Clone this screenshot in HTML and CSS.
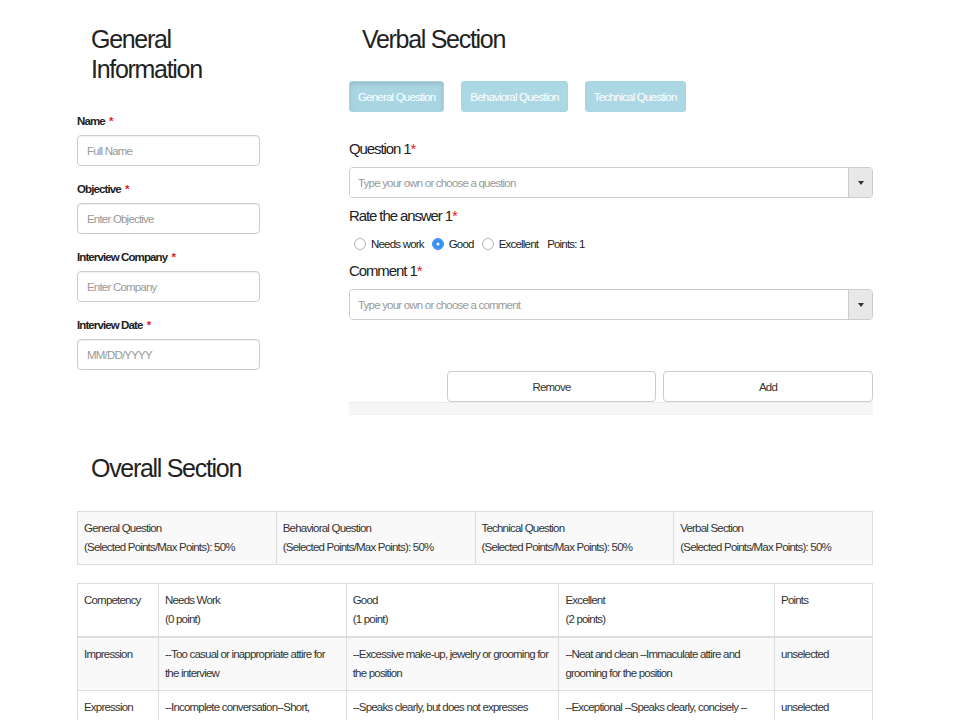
FILE: index.html
```html
<!DOCTYPE html>
<html lang="en">
<head>
<meta charset="utf-8">
<title>Interview Evaluation</title>
<link rel="stylesheet" href="styles.css">
</head>
<body>
<div class="page">
  <div class="top">
    <section class="general">
      <h2 class="heading">General Information</h2>
      <div class="field">
        <label class="label">Name <span class="req">*</span></label>
        <input class="input" type="text" placeholder="Full Name">
      </div>
      <div class="field">
        <label class="label">Objective <span class="req">*</span></label>
        <input class="input" type="text" placeholder="Enter Objective">
      </div>
      <div class="field">
        <label class="label">Interview Company <span class="req">*</span></label>
        <input class="input" type="text" placeholder="Enter Company">
      </div>
      <div class="field">
        <label class="label">Interview Date <span class="req">*</span></label>
        <input class="input" type="text" placeholder="MM/DD/YYYY">
      </div>
    </section>

    <section class="verbal">
      <h2 class="heading">Verbal Section</h2>
      <div class="tabs">
        <button class="tab tab-active">General Question</button>
        <button class="tab">Behavioral Question</button>
        <button class="tab">Technical Question</button>
      </div>
      <div class="panel">
        <div class="qlabel">Question 1<span class="req">*</span></div>
        <div class="combo">
          <input class="combo-input" type="text" placeholder="Type your own or choose a question">
          <span class="combo-btn"><span class="caret"></span></span>
        </div>
        <div class="qlabel">Rate the answer 1<span class="req">*</span></div>
        <div class="rating">
          <label class="radio"><input type="radio" name="r1"> Needs work</label>
          <label class="radio"><input type="radio" name="r1" checked> Good</label>
          <label class="radio"><input type="radio" name="r1"> Excellent</label>
          <span class="points">Points: 1</span>
        </div>
        <div class="qlabel">Comment 1<span class="req">*</span></div>
        <div class="combo">
          <input class="combo-input" type="text" placeholder="Type your own or choose a comment">
          <span class="combo-btn"><span class="caret"></span></span>
        </div>
        <div class="actions">
          <button class="btn">Remove</button>
          <button class="btn">Add</button>
        </div>
        <div class="panel-footer"></div>
      </div>
    </section>
  </div>

  <section class="overall">
    <h2 class="heading">Overall Section</h2>
    <table class="summary">
      <tr>
        <td>General Question<br>(Selected Points/Max Points): 50%</td>
        <td>Behavioral Question<br>(Selected Points/Max Points): 50%</td>
        <td>Technical Question<br>(Selected Points/Max Points): 50%</td>
        <td>Verbal Section<br>(Selected Points/Max Points): 50%</td>
      </tr>
    </table>
    <table class="rubric">
      <thead>
        <tr>
          <th class="c1">Competency</th>
          <th class="c2">Needs Work<br>(0 point)</th>
          <th class="c3">Good<br>(1 point)</th>
          <th class="c4">Excellent<br>(2 points)</th>
          <th class="c5">Points</th>
        </tr>
      </thead>
      <tbody>
        <tr>
          <td>Impression</td>
          <td>--Too casual or inappropriate attire for the interview</td>
          <td>--Excessive make-up, jewelry or grooming for the position</td>
          <td>--Neat and clean --Immaculate attire and grooming for the position</td>
          <td>unselected</td>
        </tr>
        <tr>
          <td>Expression</td>
          <td>--Incomplete conversation--Short, fragmented answers</td>
          <td>--Speaks clearly, but does not expresses his/her ideas well</td>
          <td>--Exceptional --Speaks clearly, concisely --Expresses ideas well</td>
          <td>unselected</td>
        </tr>
      </tbody>
    </table>
  </section>
</div>
</body>
</html>
```

FILE: styles.css
```css
* { box-sizing: border-box; }

html, body {
  margin: 0;
  padding: 0;
  background: #fff;
}

body {
  font-family: "Liberation Sans", Arial, sans-serif;
  color: #333;
  font-size: 11.5px;
  letter-spacing: -0.8px;
}

.page {
  width: 873px;
  padding-left: 77px;
}

.top {
  display: grid;
  grid-template-columns: 183px 1fr;
  column-gap: 89px;
}

.heading {
  margin: 24px 0 0;
  padding-left: 14px;
  font-size: 25px;
  letter-spacing: -1.3px;
  line-height: 30px;
  font-weight: normal;
  color: #222;
}

.general .heading { margin-bottom: 29px; }

.field { margin-bottom: 15px; }

.label {
  display: block;
  font-weight: bold;
  font-size: 11.5px;
  letter-spacing: -0.9px;
  line-height: 16px;
  color: #222;
  margin-bottom: 6px;
}

.label .req { margin-left: 2px; }

.req { color: #e8161b; }

.input {
  display: block;
  width: 183px;
  height: 31px;
  padding: 0 9px;
  border: 1px solid #ccc;
  border-radius: 4px;
  box-shadow: inset 0 1px 1px rgba(0,0,0,.06);
  font-family: inherit;
  font-size: 11.5px;
  letter-spacing: -0.8px;
  color: #555;
  background: #fff;
}

.input::placeholder, .combo-input::placeholder { color: #999; }

.verbal .heading { margin-bottom: 27px; padding-left: 13px; }

.tabs {
  display: flex;
  gap: 17px;
  margin-bottom: 27px;
}

.tab {
  height: 31px;
  padding: 0 8px;
  border: 1px solid #a8d5e3;
  border-radius: 3px;
  background: #acd8e6;
  color: #fff;
  font-family: inherit;
  font-size: 11.5px;
  letter-spacing: -0.8px;
}

.tab-active {
  box-shadow: inset 0 2px 4px rgba(0,0,0,.12);
  background: #a9d5e3;
}

.qlabel {
  font-size: 15px;
  letter-spacing: -1.1px;
  line-height: 20px;
  color: #222;
  margin-bottom: 8px;
}

.combo {
  display: flex;
  height: 31px;
  border: 1px solid #ccc;
  border-radius: 4px;
  margin-bottom: 8px;
  overflow: hidden;
}

.combo-input {
  flex: 1;
  border: 0;
  padding: 0 8px;
  font-family: inherit;
  font-size: 11.5px;
  letter-spacing: -0.8px;
  color: #555;
  background: #fff;
  outline: none;
}

.combo-btn {
  width: 24px;
  background: #e8e8e8;
  border-left: 1px solid #ccc;
  display: flex;
  align-items: center;
  justify-content: center;
}

.caret {
  width: 0;
  height: 0;
  border-left: 3px solid transparent;
  border-right: 3px solid transparent;
  border-top: 4px solid #333;
}

.rating {
  display: flex;
  align-items: center;
  height: 19px;
  padding-left: 5px;
  color: #222;
  margin-bottom: 8px;
}

.radio {
  display: flex;
  align-items: center;
  gap: 5px;
  margin-right: 8px;
}

.radio input {
  appearance: none;
  -webkit-appearance: none;
  margin: 0;
  width: 12px;
  height: 12px;
  border: 1px solid #b5b5b5;
  border-radius: 50%;
  background: #fff;
}

.radio input:checked {
  background: #3a8ff0;
  border-color: #3a8ff0;
  box-shadow: inset 0 0 0 3.5px #3a8ff0, inset 0 0 0 6px #fff;
}

.points { margin-left: 1px; }

.actions {
  display: flex;
  justify-content: flex-end;
  gap: 7px;
  margin-top: 51px;
}

.btn {
  width: 209px;
  height: 31px;
  border: 1px solid #ccc;
  border-radius: 4px;
  background: #fff;
  font-family: inherit;
  font-size: 11.5px;
  letter-spacing: -0.8px;
  color: #333;
}

.btn + .btn { width: 210px; }

.panel-footer {
  height: 13px;
  background: #f6f6f6;
  border-top: 1px solid #ececec;
  border-bottom: 1px solid #f0f0f0;
}

.overall .heading { margin-top: 38px; margin-bottom: 28px; }

table {
  border-collapse: collapse;
  width: 796px;
  font-size: 11.5px;
  letter-spacing: -0.8px;
  color: #333;
}

.summary td {
  width: 25%;
  background: #f9f9f9;
  border: 1px solid #ddd;
  padding: 7px 6px;
  line-height: 19px;
  vertical-align: top;
}

.rubric { margin-top: 18px; }

.rubric th, .rubric td {
  border: 1px solid #ddd;
  padding: 7px 6px;
  line-height: 19px;
  text-align: left;
  vertical-align: top;
  font-weight: normal;
}

.rubric thead th { border-bottom: 2px solid #ddd; }

.rubric tbody tr:nth-child(odd) td { background: #f9f9f9; }

.rubric .c1 { width: 81px; }
.rubric .c2 { width: 188px; }
.rubric .c3 { width: 213px; }
.rubric .c4 { width: 216px; }
.rubric .c5 { width: 98px; }
```
